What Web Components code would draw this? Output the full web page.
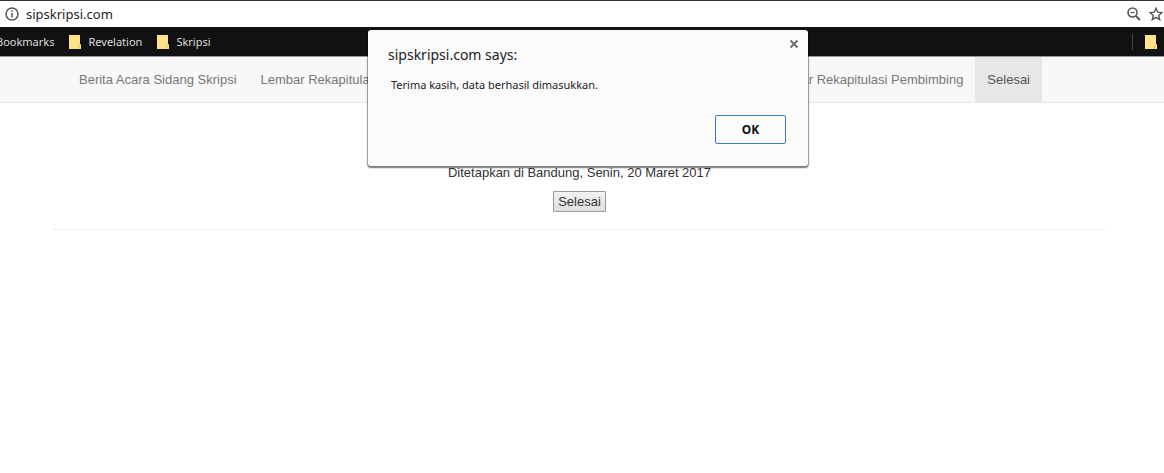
<!DOCTYPE html>
<html lang="id">
<head>
<meta charset="utf-8">
<title>sipskripsi.com</title>
<style>
body{margin:0;background:#fff;font-family:"Liberation Sans",Arial,sans-serif;font-size:13px;color:#333}
</style>
</head>
<body>
<sip-page></sip-page>
<script>
function define(name, html){
  const t=document.createElement('template');
  t.innerHTML=html;
  customElements.define(name,class extends HTMLElement{
    constructor(){super();this.attachShadow({mode:'open'}).append(t.content.cloneNode(true));}
  });
}

define('address-bar',`<style>
:host{display:flex;align-items:center;height:26px;border-top:1px solid #333;background:#fff;padding:0 1px 0 5px;font:13px/20px "Noto Sans",sans-serif;color:#222}
svg{display:block;flex:none}
input{flex:1;min-width:0;margin:0 8px 0 7px;padding:0;border:0;outline:0;background:none;font:inherit;color:inherit}
button{border:0;padding:0;background:none;margin-left:8px}
</style>
<svg width="14" height="14" viewBox="0 0 14 14" fill="none" stroke="#555" stroke-width="1.5"><circle cx="7" cy="7" r="6"/><path d="M7 6v4.500M7 3.200v1.600"/></svg>
<input type="text" aria-label="Address" value="sipskripsi.com">
<button aria-label="Zoom"><svg width="14" height="14" viewBox="0 0 14 14" fill="none" stroke="#555"><circle cx="5.500" cy="5.500" r="4.500" stroke-width="1.500"/><path d="M3.500 5.500h4" stroke-width="1.200"/><path d="M8.800 8.800l4.200 4.200" stroke-width="1.900"/></svg></button>
<button aria-label="Bookmark"><svg width="14" height="14" viewBox="0 0 14 14" fill="none" stroke="#555" stroke-width="1.400"><path d="M7 1.300l1.700 3.900 4.200.4-3.200 2.800 1 4.200L7 10.400l-3.700 2.200 1-4.200L1.100 5.600l4.200-.4z"/></svg></button>`);

define('folder-icon',`<style>:host{display:block;flex:none}svg{display:block}</style>
<svg width="12" height="14" viewBox="0 0 12 14"><path d="M0 0h11v9l1 .5V14H0z" fill="#ffe38a"/><path d="M9.500 13.500V11l1.500-1.500" fill="none" stroke="#d9ae45" stroke-width=".8"/></svg>`);

define('bookmark-bar',`<style>
:host{display:flex;align-items:center;height:29px;background:#111113;border-bottom:1px solid #999;font:11px/16px "Noto Sans",sans-serif;color:#ddd}
a{display:flex;align-items:center;gap:7px;margin-right:15px;color:inherit;text-decoration:none;white-space:nowrap}
.first{margin-left:-4px}
.other{margin:0 7px 0 12px}
i{height:16px;margin-left:auto;border-left:1px solid #444}
</style>
<a class="first" href="#">Bookmarks</a><a href="#"><folder-icon></folder-icon>Revelation</a><a href="#"><folder-icon></folder-icon>Skripsi</a><i></i><a class="other" href="#" aria-label="Other bookmarks"><folder-icon></folder-icon></a>`);

define('nav-item',`<style>
:host{display:block}
:host([wide]){flex:1}
a{display:block;padding:0 12px;line-height:45px;color:#777;text-decoration:none;white-space:nowrap}
:host([active]) a{background:#e7e7e7;color:#555}
</style><a href="#"><slot></slot></a>`);

define('site-nav',`<style>
:host{display:block;background:#f8f8f8;border-bottom:1px solid #e7e7e7}
nav{display:flex;padding:0 122px 0 67px}
</style><nav><slot></slot></nav>`);

define('form-footer',`<style>
:host{display:flex;flex-direction:column;align-items:center;margin:60px 58px 0 53px;padding-bottom:17px;border-bottom:1px solid #eee}
p{margin:0 0 8px;line-height:20px}
button{font:inherit;line-height:17px;color:#333;padding:1px 4px;border:1px solid #999;border-radius:1px;background:linear-gradient(#f2f2f2,#dedede)}
</style><p><slot></slot></p><button>Selesai</button>`);

define('alert-dialog',`<style>
:host{position:absolute;top:30px;left:calc(50% - 214px);box-sizing:border-box;width:440px;padding:15px 22px 22px 20px;border-radius:3px;background:#fbfbfb;box-shadow:0 1px 1px 1px rgba(0,0,0,.35),0 2px 2px rgba(0,0,0,.25);font:11px/16px "Noto Sans",sans-serif;color:#222}
h1{margin:0;font-size:14px;line-height:20px;font-weight:400}
p{margin:12px 0 22px 3px}
.ok{display:block;margin-left:auto;width:71px;height:29px;border:1px solid #3f78c0;border-radius:2px;background:#fbfbfb;font:bold 12px/16px "Noto Sans",sans-serif;color:#111}
.close{position:absolute;top:9px;right:9px;padding:0;border:0;background:none}
svg{display:block}
</style>
<h1>sipskripsi.com says:</h1><p><slot></slot></p>
<button class="ok">OK</button>
<button class="close" aria-label="Close"><svg width="10" height="10" viewBox="0 0 10 10"><path d="M1.500 1.500l7 7M8.500 1.500l-7 7" stroke="#707070" stroke-width="2"/></svg></button>`);

define('sip-page',`<style>:host{display:block;position:relative}</style>
<address-bar></address-bar>
<bookmark-bar></bookmark-bar>
<site-nav><nav-item>Berita Acara Sidang Skripsi</nav-item><nav-item wide>Lembar Rekapitulasi</nav-item><nav-item>Lembar Rekapitulasi Pembimbing</nav-item><nav-item active>Selesai</nav-item></site-nav>
<form-footer>Ditetapkan di Bandung, Senin, 20 Maret 2017</form-footer>
<alert-dialog role="alertdialog">Terima kasih, data berhasil dimasukkan.</alert-dialog>`);
</script>
</body>
</html>
